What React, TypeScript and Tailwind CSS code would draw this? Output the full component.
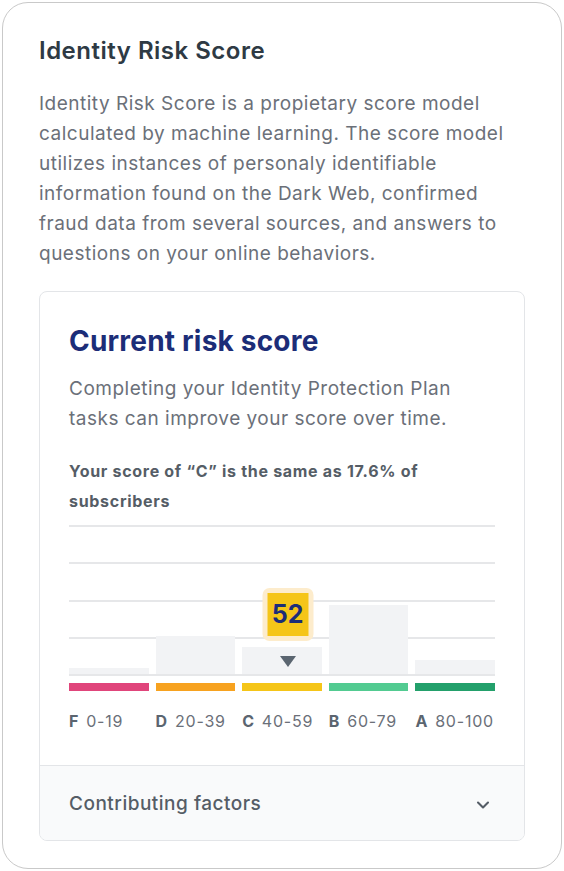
import { ChevronDown } from 'lucide-react'

const bars = [
  { grade: 'F', range: '0-19', height: 6, color: 'bg-[#e0457b]' },
  { grade: 'D', range: '20-39', height: 38, color: 'bg-[#f7a21f]' },
  { grade: 'C', range: '40-59', height: 27, color: 'bg-[#f5c518]' },
  { grade: 'B', range: '60-79', height: 69, color: 'bg-[#52cb91]' },
  { grade: 'A', range: '80-100', height: 14, color: 'bg-[#23a06b]' },
]

export default function App() {
  return (
    <div className="w-[564px] h-[871px] bg-white p-[2px] font-['Inter',sans-serif]">
      <div className="h-full rounded-[26px] border border-[#c9c9c9] px-9 pt-[30px]">
        <h1 className="text-[24px] leading-[36px] font-semibold text-[#2e3a44] tracking-[0.5px]">
          Identity Risk Score
        </h1>
        <p className="mt-[20px] text-[19px] leading-[30px] text-[#6b7079] tracking-[0.5px]">
          Identity Risk Score is a propietary score model calculated by machine learning. The score model utilizes instances of personaly identifiable information found on the Dark Web, confirmed fraud data from several sources, and answers to questions on your online behaviors.
        </p>

        {/* current score card */}
        <div className="mt-[22px] rounded-[8px] border border-[#e3e5e8] overflow-hidden">
          <div className="px-[29px] pt-[30px] pb-[32px]">
            <h2 className="text-[28px] leading-[38px] font-bold text-[#1c2d78] tracking-[0.2px]">
              Current risk score
            </h2>
            <p className="mt-[14px] text-[19px] leading-[30px] text-[#6b7079] tracking-[0.5px]">
              Completing your Identity Protection Plan tasks can improve your score over time.
            </p>
            <p className="mt-[22px] text-[16px] leading-[30px] font-bold text-[#555d66] tracking-[0.7px]">
              Your score of “C” is the same as 17.6% of subscribers
            </p>

            <div className="relative mt-[9px] h-[151px]">
              <div className="absolute inset-0 flex flex-col justify-between">
                <div className="h-[2px] bg-[#e6e7e9]" />
                <div className="h-[2px] bg-[#e6e7e9]" />
                <div className="h-[2px] bg-[#e6e7e9]" />
                <div className="h-[2px] bg-[#e6e7e9]" />
                <div className="h-[2px] bg-[#e6e7e9]" />
              </div>
              <div className="absolute inset-x-0 bottom-[2px] top-0 flex items-end gap-[7px]">
                {bars.map((b) => (
                  <div key={b.grade} className="relative flex-1">
                    <div className="bg-[#f2f3f5]" style={{ height: b.height }} />
                    {b.grade === 'C' && (
                      <>
                        <div className="absolute left-[57%] -translate-x-1/2 top-[9px] w-0 h-0 border-l-[8px] border-r-[8px] border-t-[11px] border-l-transparent border-r-transparent border-t-[#5b6570]" />
                        <div className="absolute left-[57%] -translate-x-1/2 bottom-[33px] rounded-[7px] bg-[#fdeccc] p-[5px]">
                          <div className="w-[41px] h-[43px] bg-[#f5c518] flex items-center justify-center text-[25px] font-bold text-[#1c2d78]">
                            52
                          </div>
                        </div>
                      </>
                    )}
                  </div>
                ))}
              </div>
            </div>

            <div className="mt-[7px] flex gap-[7px]">
              {bars.map((b) => (
                <div key={b.grade} className={`flex-1 h-[8px] ${b.color}`} />
              ))}
            </div>
            <div className="mt-[18px] flex gap-[7px]">
              {bars.map((b) => (
                <div key={b.grade} className="flex-1 text-[16px] leading-[24px] text-[#6b7079] whitespace-nowrap tracking-[0.8px]">
                  <span className="font-bold text-[#5b6570]">{b.grade}</span>
                  <span className="ml-[7px]">{b.range}</span>
                </div>
              ))}
            </div>
          </div>

          <div className="border-t border-[#e3e5e8] bg-[#f9fafb] h-[75px] pt-[3px] px-[29px] flex items-center justify-between">
            <span className="text-[19px] font-medium text-[#555d66] tracking-[0.5px]">Contributing factors</span>
            <ChevronDown className="w-5 h-5 mr-[2px] text-[#555d66]" strokeWidth={2.5} />
          </div>
        </div>
      </div>
    </div>
  )
}
